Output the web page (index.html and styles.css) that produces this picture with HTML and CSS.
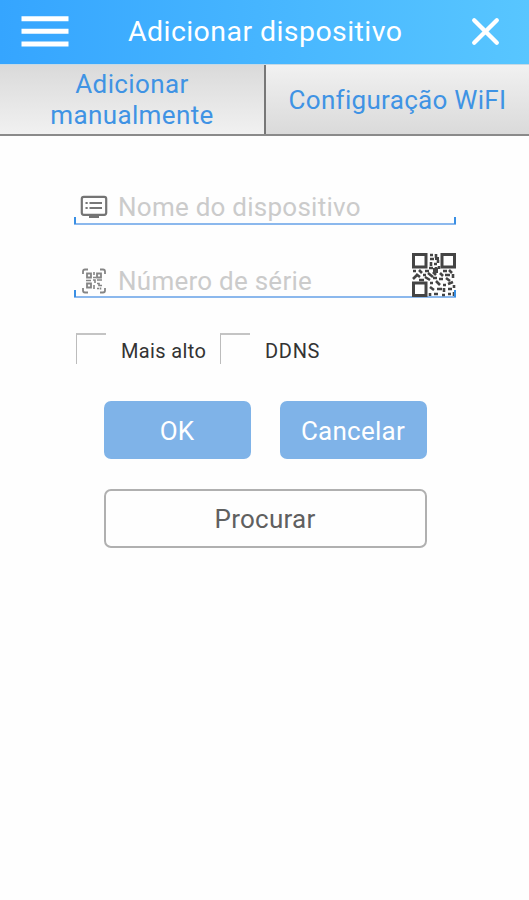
FILE: index.html
```html
<!DOCTYPE html>
<html lang="pt">
<head>
<meta charset="utf-8">
<title>Adicionar dispositivo</title>
<link rel="stylesheet" href="styles.css">
</head>
<body>
<header class="topbar">
  <svg class="menu" viewBox="0 0 48 32"><path d="M.5 2.8h47M.5 15.3h47M.5 28h47" stroke="#fff" stroke-width="5"/></svg>
  <h1><span>Adicionar dispositivo</span></h1>
  <svg class="close" viewBox="0 0 30 30"><path d="M3.2 3.2 25.8 25.8M25.8 3.2 3.2 25.8" stroke="#fff" stroke-width="4.3" stroke-linecap="round"/></svg>
</header>
<nav class="tabs">
  <div class="tab active"><span>Adicionar<br>manualmente</span></div>
  <div class="tab"><span class="wifi">Configuração WiFI</span></div>
</nav>
<main class="form">
  <div class="field">
    <svg class="device" viewBox="0 0 28 25"><rect x="1.8" y="1.8" width="24.4" height="18" rx="2" fill="none" stroke="#747474" stroke-width="2.2"/><path d="M9 20h10v3H9z" fill="#747474"/><path d="M5.5 8h2.2M9.5 8H22M5.5 13h2.2M9.5 13H22" stroke="#777" stroke-width="2.1"/></svg>
    <span class="hint name">Nome do dispositivo</span>
  </div>
  <div class="field serial">
    <svg class="scan" viewBox="0 0 24 26" fill="none" stroke="#858585" stroke-width="1.8"><path d="M1 6V3.5Q1 1.5 3 1.5h3M18 1.5h3q2 0 2 2V6M1 20v2.5q0 2 2 2h3M18 24.5h3q2 0 2-2V20"/><path d="M5 5.5h4v4H5zM15 5.5h4v4h-4zM5 15.5h4v4H5z"/><path d="M12 4v3M11 9.5h3M4 12.5h5M11 12h2v3M15 12h5M12 17v4M15 15.5h2v2h3M15 20.5h2M18.5 19.5v2" stroke-width="1.6"/></svg>
    <span class="hint number">Número de série</span>
    <svg class="qr" viewBox="0 0 44 44" fill="none" stroke="#444"><path stroke-width="3" d="M1.5 1.5h12.5v12.5H1.5zM30 1.5h12.5v12.5H30zM1.5 30h12.5v12.5H1.5z"/><path stroke-width="2.6" d="M18 2h3M24 1v4M18 6h4M26 7v3M19 9v4M22 11h3M17 15h4M24 14v3M27 13v3M1 18h3M7 17l3 3M13 18h4M21 19l3 3M31 18h4M37 17l3 3M4 21l4 3M11 22h3M16 20l5 4M28 20l3 3M33 22h5M41 21v4M1 26l4-4M7 27h5M13 24l5 3M21 25h4M27 26h4M34 25l4 3M18 30h3M24 28l4 4M31 32h3M36 31l5-2M42 32v3M18 34l4 3M25 36h5M32 35v4M36 36h4M18 40v3M22 41h4M30 42h3M36 41h3M42 39v4"/><path d="M21 15h5v5h-5zM23 4h4v3h-4z" fill="#444" stroke="none"/></svg>
  </div>
  <div class="checks">
    <i class="box"></i><span class="label more">Mais alto</span>
    <i class="box"></i><span class="label ddns">DDNS</span>
  </div>
  <div class="buttons">
    <div class="btn ok"><span>OK</span></div>
    <div class="btn cancel"><span>Cancelar</span></div>
    <div class="btn search"><span>Procurar</span></div>
  </div>
</main>
</body>
</html>
```
FILE: styles.css
```css
* { box-sizing: border-box; }
body { margin: 0; background: #fefefe; font-family: Roboto, sans-serif; height: 900px; overflow: hidden; }
svg { display: block; flex: none; }
.topbar { height: 64px; display: flex; align-items: center; padding: 0 28px 0 21px; background: linear-gradient(90deg, #35a5ff, #58c6ff); }
.menu { width: 48px; height: 32px; }
.close { width: 30px; height: 30px; }
h1 { flex: 1; margin: 0; padding-left: 59px; font-size: 28.5px; font-weight: 400; line-height: 62px; color: #fff; white-space: nowrap; letter-spacing: .43px; }
.tabs { height: 72px; display: flex; border-top: 1px solid #c5d9e5; border-bottom: 2px solid #8a8a8a; }
.tab { flex: 1; display: flex; align-items: center; justify-content: center; text-align: center; font-size: 26px; line-height: 31px; letter-spacing: .3px; color: #3f93e4; background: linear-gradient(#f1f1f1, #dadada); white-space: nowrap; }
.wifi { padding-top: 2px; }
.tab.active { flex: 0 0 266px; letter-spacing: .38px; border-right: 2px solid #777; background: linear-gradient(#dadada, #f1f1f1); }
.form { padding: 54px 73px 0 74px; }
.field { position: relative; width: 382px; height: 35px; display: flex; align-items: center; border-bottom: 2px solid #8bb8ed; padding-left: 6px; }
.field::before, .field::after { content: ""; position: absolute; bottom: -1px; width: 2px; height: 7px; background: #398fe4; }
.field::before { left: 0; }
.field::after { right: 0; }
.serial { margin-top: 38px; }
.device { width: 28px; height: 25px; margin-top: 2px; }
.scan { width: 24px; height: 26px; margin: 2px 0 0 2px; }
.hint { margin-left: 10px; font-size: 26px; line-height: 32px; color: #cbcbcb; white-space: nowrap; letter-spacing: .25px; padding-top: 1px; }
.number { margin-left: 12px; padding-top: 3px; }
.qr { width: 44px; height: 44px; position: absolute; right: 0; bottom: -1px; }
.checks { height: 31px; margin-top: 35px; padding-left: 2px; display: flex; align-items: center; }
.box { width: 30px; height: 31px; border-top: 2px solid #c4c4c4; border-left: 1px solid #bcbcbc; }
.label { margin-left: 15px; margin-top: 4px; font-size: 20px; line-height: 24px; color: #333; white-space: nowrap; letter-spacing: .35px; }
.more { width: 99px; }
.ddns { letter-spacing: .7px; }
.buttons { margin-top: 37px; padding-left: 29.5px; display: grid; grid-template-columns: 147px 147px; gap: 30px 29px; }
.btn { height: 58px; display: flex; align-items: center; justify-content: center; border-radius: 7px; background: #7fb3e8; color: #fff; font-size: 26px; line-height: 30px; letter-spacing: .25px; padding-top: 1px; }
.search { grid-column: 1 / 3; height: 59px; padding-top: 0; background: #fefefe; border: 2px solid #b0b0b0; color: #606060; }
```
